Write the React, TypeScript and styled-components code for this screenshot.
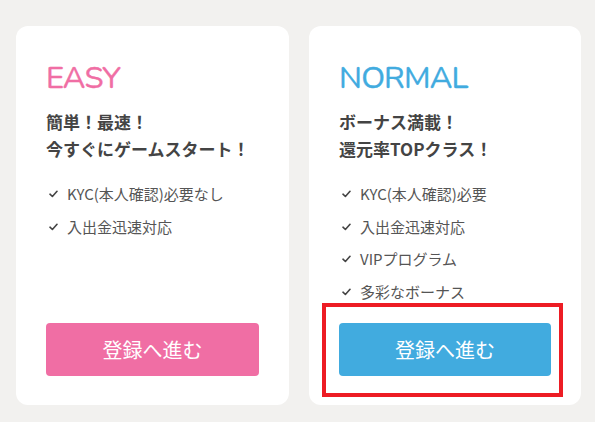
import styled, { createGlobalStyle } from 'styled-components';

const GlobalStyle = createGlobalStyle`
  html, body {
    margin: 0;
    padding: 0;
    background: #f2f1ef;
  }
  body {
    font-family: 'Noto Sans CJK JP', 'Noto Sans', sans-serif;
  }
`;

const Page = styled.div`
  display: grid;
  grid-template-columns: 273px 272px;
  gap: 20px;
  padding: 26px 0 0 16px;
  width: 595px;
  height: 422px;
  box-sizing: border-box;
`;

const Card = styled.div`
  position: relative;
  display: flex;
  flex-direction: column;
  height: 379px;
  box-sizing: border-box;
  padding: 32px 30px 29px;
  background: #fff;
  border-radius: 12px;
`;

const Title = styled.h2<{ $color: string }>`
  margin: 0;
  font-family: 'Nunito', 'Open Sans', sans-serif;
  font-weight: 400;
  font-size: 31px;
  line-height: 40px;
  letter-spacing: -0.8px;
  color: ${(p) => p.$color};
  -webkit-text-stroke: 0.4px ${(p) => p.$color};
`;

const Lead = styled.p`
  margin: 10px 0 0;
  font-size: 17px;
  font-weight: 700;
  line-height: 27px;
  color: #444;
`;

const Features = styled.ul`
  list-style: none;
  margin: 21px 0 0;
  padding: 0;
  display: flex;
  flex-direction: column;
  gap: 10.5px;
`;

const Feature = styled.li`
  display: flex;
  align-items: center;
  gap: 9px;
  font-size: 15px;
  line-height: 22px;
  color: #555;
  padding-left: 3px;
`;

const Button = styled.button<{ $bg: string }>`
  margin-top: auto;
  height: 53px;
  width: 100%;
  border: none;
  border-radius: 4px;
  background: ${(p) => p.$bg};
  color: #fff;
  font-family: 'Noto Sans CJK JP', sans-serif;
  font-size: 20px;
  font-weight: 400;
  cursor: pointer;
`;

const Highlight = styled.div`
  position: absolute;
  left: 13px;
  right: 18px;
  top: 277px;
  bottom: 8px;
  border: 4px solid #ed1c24;
  pointer-events: none;
`;

const Check = () => (
  <svg width="9" height="8" viewBox="0 0 9 8" fill="none">
    <path d="M1 4.2 L3.4 6.5 L8 1.3" stroke="#444" strokeWidth="1.6" strokeLinecap="round" strokeLinejoin="round" />
  </svg>
);

const plans = [
  {
    name: 'EASY',
    color: '#f06ea4',
    lead: ['簡単！最速！', '今すぐにゲームスタート！'],
    features: ['KYC(本人確認)必要なし', '入出金迅速対応'],
    highlight: false,
  },
  {
    name: 'NORMAL',
    color: '#41abdf',
    lead: ['ボーナス満載！', '還元率TOPクラス！'],
    features: ['KYC(本人確認)必要', '入出金迅速対応', 'VIPプログラム', '多彩なボーナス'],
    highlight: true,
  },
];

export default function App() {
  return (
    <>
      <GlobalStyle />
      <Page>
        {plans.map((plan) => (
          <Card key={plan.name}>
            <Title $color={plan.color}>{plan.name}</Title>
            <Lead>
              {plan.lead[0]}
              <br />
              {plan.lead[1]}
            </Lead>
            <Features>
              {plan.features.map((f) => (
                <Feature key={f}>
                  <Check />
                  {f}
                </Feature>
              ))}
            </Features>
            <Button $bg={plan.color}>登録へ進む</Button>
            {plan.highlight && <Highlight />}
          </Card>
        ))}
      </Page>
    </>
  );
}
